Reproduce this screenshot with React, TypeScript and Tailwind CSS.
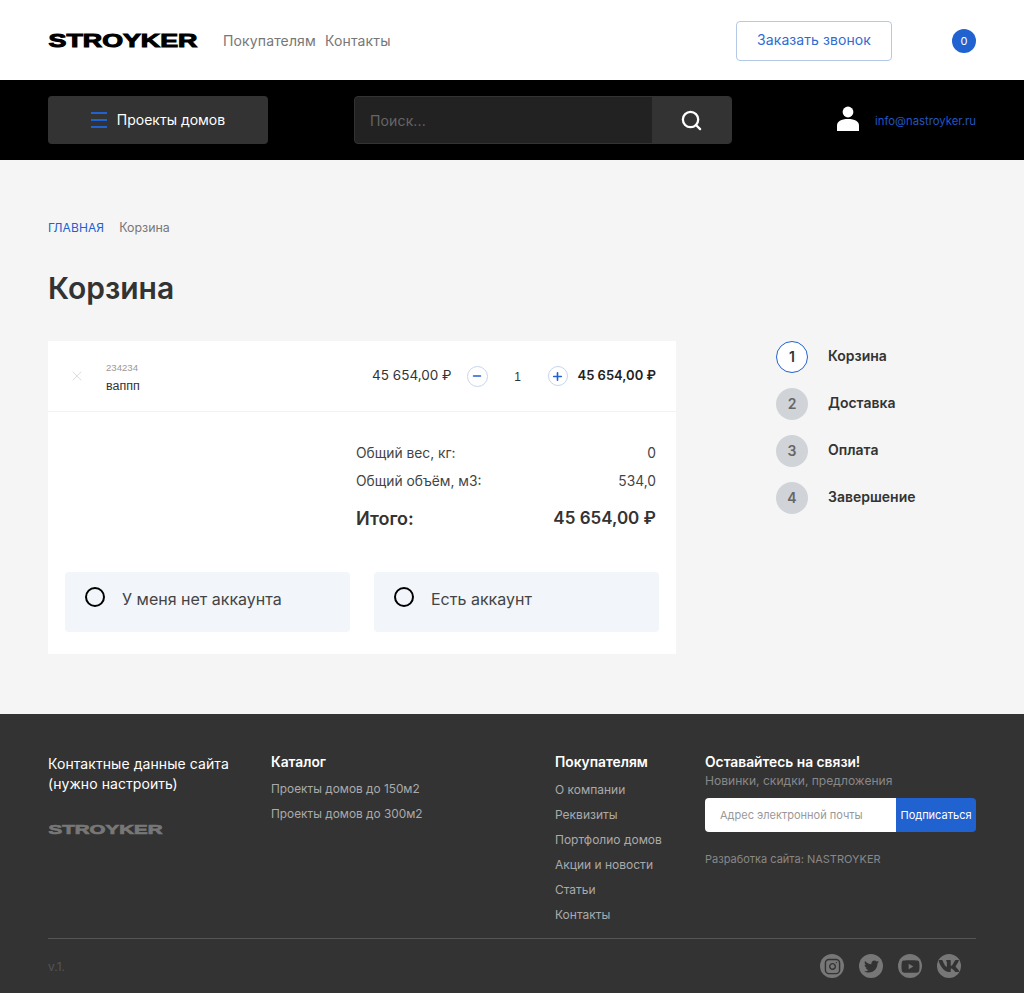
import React from "react";
import { Search, X, Minus, Plus, Instagram } from "lucide-react";
import { FaTwitter, FaYoutube, FaVk } from "react-icons/fa";

function Logo({ width, height, color }: { width: number; height: number; color: string }) {
  return (
    <svg width={width} height={height} viewBox={`0 0 ${width} ${height}`} className="block overflow-visible">
      <text
        x="0.5"
        y={height - 0.5}
        textLength={width - 1}
        lengthAdjust="spacingAndGlyphs"
        fill={color}
        stroke={color}
        strokeWidth={height / 14}
        fontFamily="'Liberation Sans', sans-serif"
        fontWeight="700"
        fontSize={height * 1.36}
      >
        STROYKER
      </text>
    </svg>
  );
}

function Step({ n, label, active }: { n: number; label: string; active?: boolean }) {
  return (
    <div className="flex items-center gap-5">
      <div
        className={
          active
            ? "flex h-8 w-8 items-center justify-center rounded-full border border-[#2162d1] bg-white text-sm font-semibold text-[#333]"
            : "flex h-8 w-8 items-center justify-center rounded-full bg-[#d0d3d8] text-sm font-semibold text-[#666]"
        }
      >
        {n}
      </div>
      <span className="mb-1 text-[14px] font-semibold text-[#333]">{label}</span>
    </div>
  );
}

function Radio({ label }: { label: string }) {
  return (
    <div className="flex h-[60px] w-[285px] items-center gap-[17px] rounded-sm bg-[#f2f5fa] pl-5">
      <span className="mb-[10px] h-5 w-5 rounded-full border-2 border-black" />
      <span className="mb-[6px] text-[16px] text-[#444]">{label}</span>
    </div>
  );
}

function Social({ children }: { children: React.ReactNode }) {
  return (
    <div className="flex h-6 w-6 items-center justify-center rounded-full bg-[#777] text-[#333]">{children}</div>
  );
}

function FootLinks({
  title,
  links,
  className,
  itemClass,
}: {
  title: string;
  links: string[];
  className: string;
  itemClass: string;
}) {
  return (
    <div className={className}>
      <div className="text-[13.8px] leading-4 font-semibold text-white">{title}</div>
      <ul className="mt-[7px] flex flex-col">
        {links.map((l) => (
          <li key={l} className={itemClass}>
            {l}
          </li>
        ))}
      </ul>
    </div>
  );
}

export default function App() {
  return (
    <div className="min-h-[993px] bg-[#f5f5f5] font-['Inter',sans-serif]">
      <header className="flex h-20 items-center bg-white pr-12 pl-12">
        <Logo width={150} height={14} color="#000" />
        <nav className="ml-[25px] flex gap-[9px] text-[14px] tracking-[0.01em] text-[#777]">
          <span>Покупателям</span>
          <span>Контакты</span>
        </nav>
        <button className="mt-[2px] ml-auto h-10 w-[156px] rounded-sm border border-[#b3c9e6] pb-1 text-[14px] tracking-[0.005em] text-[#2f6bd3]">
          Заказать звонок
        </button>
        <div className="mt-[2px] ml-[60px] flex h-6 w-6 items-center justify-center rounded-full bg-[#2162d1] text-[11px] text-white">
          0
        </div>
      </header>

      <div className="flex h-20 items-center bg-black px-12">
        <button className="flex h-12 w-[220px] items-center justify-center gap-[10px] rounded-sm bg-[#333] text-[14px] text-white">
          <span className="flex w-4 flex-col gap-[5px]">
            <span className="h-[2px] bg-[#2162d1]" />
            <span className="h-[2px] bg-[#2162d1]" />
            <span className="h-[2px] bg-[#2162d1]" />
          </span>
          <span className="mb-[2px]">Проекты домов</span>
        </button>
        <div className="ml-[86px] flex h-12 w-[378px] overflow-hidden rounded-sm border border-[#333] bg-[#222]">
          <div className="flex flex-1 items-center pl-[15px] text-[14px] tracking-[0.01em] text-[#666]">Поиск...</div>
          <div className="flex w-[79px] items-center justify-center bg-[#333]">
            <Search size={23} strokeWidth={2.4} className="text-white" />
          </div>
        </div>
        <div className="ml-auto flex items-center gap-4">
          <svg width="22" height="25" viewBox="0 0 22 25" fill="#fff" className="mb-1">
            <circle cx="11" cy="6" r="5.4" />
            <path d="M0 25v-5.5C0 15.5 4 13 11 13s11 2.5 11 6.5V25z" />
          </svg>
          <span className="mt-[2px] text-[11.3px] text-[#2256c0]">info@nastroyker.ru</span>
        </div>
      </div>

      <main className="h-[554px] px-12 pt-[60px]">
        <div className="flex items-center gap-[15px] text-[12px] leading-4">
          <span className="tracking-[0.01em] text-[#2162d1]">ГЛАВНАЯ</span>
          <span className="text-[12.4px] text-[#777]">Корзина</span>
        </div>
        <h1 className="mt-[34px] text-[30px] leading-9 font-semibold text-[#333]">Корзина</h1>
        <div className="mt-[35px] flex">
          <section className="h-[313px] w-[628px] bg-white">
            <div className="flex h-[71px] items-center border-b border-[#f2f2f2] pr-5 pl-[21px]">
              <X size={16} strokeWidth={1.2} className="text-[#d5d5d5]" />
              <div className="mt-[3px] ml-[21px]">
                <div className="font-['Liberation_Sans',sans-serif] text-[9.6px] leading-3 text-[#999]">234234</div>
                <div className="mt-1 font-['Liberation_Sans',sans-serif] text-[12.5px] leading-4 text-[#333]">
                  ваппп
                </div>
              </div>
              <div className="mb-[2px] ml-auto text-[13.5px] text-[#333]">45 654,00 ₽</div>
              <div className="ml-[15px] flex h-[21px] w-[21px] items-center justify-center rounded-full border border-[#c5d6ee] text-[#2162d1]">
                <Minus size={12} strokeWidth={3} />
              </div>
              <div className="mt-[2px] w-[60px] text-center font-['Liberation_Sans',sans-serif] text-[12px] text-[#333]">
                1
              </div>
              <div className="flex h-[20px] w-[20px] items-center justify-center rounded-full border border-[#c5d6ee] text-[#2162d1]">
                <Plus size={13} strokeWidth={3} />
              </div>
              <div className="ml-[10px] text-[13px] font-semibold text-[#222]">45 654,00 ₽</div>
            </div>
            <div className="mt-[27px] ml-[308px] w-[300px] text-[13.8px] text-[#444]">
              <div className="flex h-7 items-center justify-between">
                <span>Общий вес, кг:</span>
                <span>0</span>
              </div>
              <div className="flex h-7 items-center justify-between">
                <span>Общий объём, м3:</span>
                <span>534,0</span>
              </div>
              <div className="mt-[5px] flex h-9 items-center justify-between text-[18px] font-semibold text-[#333]">
                <span>Итого:</span>
                <span className="mt-[2px] text-[17px]">45 654,00 ₽</span>
              </div>
            </div>
            <div className="mt-[36px] flex gap-6 px-[17px]">
              <Radio label="У меня нет аккаунта" />
              <Radio label="Есть аккаунт" />
            </div>
          </section>
          <aside className="ml-[100px] flex flex-col gap-[15px]">
            <Step n={1} label="Корзина" active />
            <Step n={2} label="Доставка" />
            <Step n={3} label="Оплата" />
            <Step n={4} label="Завершение" />
          </aside>
        </div>
      </main>

      <footer className="h-[279px] bg-[#333] px-12 pt-10">
        <div className="flex h-[185px] border-b border-[#555]">
          <div className="w-[223px]">
            <div className="text-[14px] leading-5 tracking-[0.005em] text-white">
              Контактные данные сайта
              <br />
              (нужно настроить)
            </div>
            <div className="mt-[30px]">
              <Logo width={115} height={10} color="#777" />
            </div>
          </div>
          <FootLinks
            className="w-[284px]"
            itemClass="text-[11.85px] leading-[25px] text-[#aaa]"
            title="Каталог"
            links={["Проекты домов до 150м2", "Проекты домов до 300м2"]}
          />
          <FootLinks
            className="w-[150px]"
            itemClass="text-[12px] leading-[25px] text-[#aaa]"
            title="Покупателям"
            links={["О компании", "Реквизиты", "Портфолио домов", "Акции и новости", "Статьи", "Контакты"]}
          />
          <div className="w-[271px]">
            <div className="text-[13.8px] leading-4 font-semibold text-white">Оставайтесь на связи!</div>
            <div className="mt-[3px] text-[12.1px] leading-4 text-[#888]">Новинки, скидки, предложения</div>
            <div className="mt-[9px] flex h-[34px]">
              <div className="flex w-[191px] items-center rounded-l-sm bg-white pt-px pl-[15px] text-[11px] text-[#999]">
                Адрес электронной почты
              </div>
              <button className="w-20 rounded-r-sm bg-[#2162d1] text-[11px] text-white">Подписаться</button>
            </div>
            <div className="mt-[19px] text-[11px] leading-4 text-[#888]">Разработка сайта: NASTROYKER</div>
          </div>
        </div>
        <div className="flex items-center justify-between pt-[15px] pr-[15px]">
          <span className="mt-[2px] text-[12px] text-[#555]">v.1.</span>
          <div className="flex gap-[15px]">
            <Social>
              <Instagram size={17} strokeWidth={2} />
            </Social>
            <Social>
              <FaTwitter size={15} />
            </Social>
            <Social>
              <FaYoutube size={19} />
            </Social>
            <Social>
              <FaVk size={22} />
            </Social>
          </div>
        </div>
      </footer>
    </div>
  );
}
